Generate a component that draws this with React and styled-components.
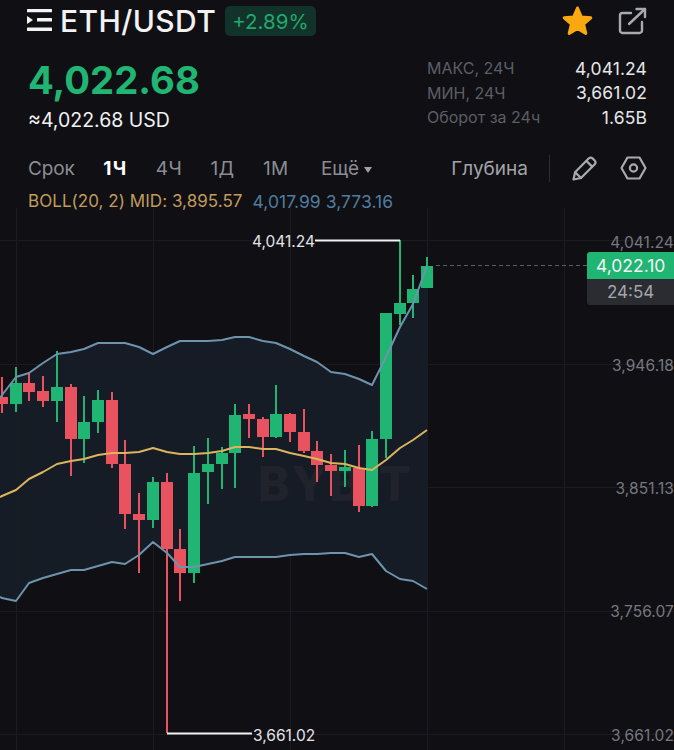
import React from "react";
import styled, { createGlobalStyle } from "styled-components";

const Global = createGlobalStyle`
  html, body { margin: 0; padding: 0; background: #0f0f14; }
  * { box-sizing: border-box; }
`;

const GREEN = "#21b573";
const RED = "#e8535f";
const CHART_TOP = 208;

const Page = styled.div`
  width: 674px;
  height: 750px;
  overflow: hidden;
  display: flex;
  flex-direction: column;
  background: #0f0f14;
  font-family: Inter, "Noto Sans", sans-serif;
  color: #f2f2f3;
`;

const TopBar = styled.header`
  height: 42px;
  padding: 0 27px;
  display: flex;
  align-items: center;
`;

const Pair = styled.h1`
  margin: 0 0 0 7px;
  font-size: 30px;
  font-weight: 500;
  line-height: 42px;
  letter-spacing: 0.4px;
`;

const Badge = styled.span`
  margin-left: 9px;
  height: 30px;
  padding: 0 7px;
  display: flex;
  align-items: center;
  border-radius: 5px;
  background: #12332a;
  color: #22a76c;
  font-size: 20.5px;
`;

const TopActions = styled.div`
  margin-left: auto;
  display: flex;
  align-items: center;
  gap: 24px;
`;

const Summary = styled.section`
  height: 100px;
  padding: 0 27px 0 28px;
  display: flex;
  justify-content: space-between;
`;

const PriceBlock = styled.div`
  display: flex;
  flex-direction: column;
`;

const LastPrice = styled.div`
  margin-top: 14px;
  font-size: 38.3px;
  line-height: 48px;
  font-weight: 700;
  color: ${GREEN};
`;

const UsdPrice = styled.div`
  margin-top: 3px;
  font-size: 19.5px;
  line-height: 26px;
  font-weight: 400;
`;

const Stats = styled.dl`
  margin: 14px 0 0;
  width: 220px;
  display: grid;
  grid-template-columns: auto 1fr;
  grid-auto-rows: 24.5px;
  align-items: center;
  font-size: 16px;
`;

const StatLabel = styled.dt`
  color: #5d5e64;
`;

const StatValue = styled.dd`
  margin: 0;
  text-align: right;
  color: #e6e6e8;
  font-size: 17.5px;
  letter-spacing: 0.1px;
`;

const Toolbar = styled.nav`
  height: 52px;
  padding: 0 27px 0 28px;
  display: flex;
  align-items: center;
  font-size: 19px;
`;

const Tabs = styled.div`
  display: flex;
  align-items: center;
  gap: 28.5px;
`;

const Tab = styled.span`
  color: ${(p) => (p.$active ? "#ffffff" : "#8c8d93")};
  font-weight: ${(p) => (p.$active ? 700 : 400)};
  letter-spacing: ${(p) => (p.$active ? "1.2px" : "0.3px")};

  &:first-child {
    letter-spacing: -0.1px;
  }
`;

const More = styled.span`
  display: flex;
  align-items: center;
  gap: 5px;
  color: #8c8d93;
  margin-left: 4px;
`;

const Caret = styled.i`
  width: 0;
  height: 0;
  margin-top: 3px;
  border-left: 4px solid transparent;
  border-right: 4px solid transparent;
  border-top: 6px solid #a0a1a6;
`;

const ToolbarRight = styled.div`
  margin-left: auto;
  display: flex;
  align-items: center;
`;

const Depth = styled.span`
  color: #a3a4a9;
`;

const Divider = styled.span`
  width: 1px;
  height: 27px;
  margin: 0 22px 0 21px;
  background: #2c2d33;
`;

const IconGap = styled.span`
  display: flex;
  align-items: center;
  gap: 23px;
`;

const Legend = styled.div`
  height: 14px;
  padding: 0 28px;
  display: flex;
  align-items: center;
  gap: 10px;
  font-size: 17px;
  letter-spacing: 0.05px;
  white-space: nowrap;
`;

const LegendGold = styled.span`
  color: #c19c5c;
`;

const LegendBlue = styled.span`
  color: #4f7d9e;
  font-size: 17.5px;
`;

const Chart = styled.section`
  position: relative;
  flex: 1;
`;

const ChartSvg = styled.svg`
  display: block;
  width: 674px;
  height: 542px;
`;

const AxisLabel = styled.span`
  position: absolute;
  right: 0;
  top: ${(p) => p.$y - CHART_TOP}px;
  transform: translateY(-50%);
  font-size: 15.5px;
  letter-spacing: 0.1px;
  color: #77787e;
`;

const ExtremeLabel = styled.span`
  position: absolute;
  left: ${(p) => p.$x}px;
  top: ${(p) => p.$y - CHART_TOP}px;
  transform: translateY(-50%);
  font-size: 15.5px;
  color: #e4e4e6;
`;

const PriceTag = styled.div`
  position: absolute;
  left: 587px;
  right: 0;
  top: ${252 - CHART_TOP}px;
  display: flex;
  flex-direction: column;
`;

const TagPrice = styled.div`
  height: 27px;
  display: flex;
  align-items: center;
  padding-left: 9px;
  background: ${GREEN};
  color: #f4f4f4;
  font-size: 17.5px;
  border-radius: 3px 0 0 0;
`;

const TagTimer = styled.div`
  height: 26px;
  display: flex;
  align-items: center;
  padding-left: 20px;
  background: #2a2c32;
  color: #a5a6ab;
  font-size: 17px;
  border-radius: 0 0 0 3px;
`;

/* x, bodyTop, bodyBottom, wickTop, wickBottom, up */
const candles = [
  [2, 397, 404, 377, 413, 0], [16, 383, 404, 367, 412, 1], [29, 383, 392, 372, 401, 0],
  [43, 391, 401, 376, 407, 0], [57, 387, 401, 351, 422, 1], [71, 387, 439, 384, 476, 0],
  [84, 422, 439, 396, 463, 1], [98, 400, 422, 390, 433, 1], [112, 400, 464, 392, 468, 0],
  [125, 464, 514, 440, 529, 0], [139, 514, 520, 493, 573, 0], [153, 482, 520, 477, 528, 1],
  [167, 482, 549, 473, 733, 0], [180, 549, 573, 529, 601, 0], [194, 473, 573, 446, 583, 1],
  [208, 464, 472, 438, 504, 1], [222, 453, 464, 447, 489, 1], [235, 415, 453, 404, 488, 1],
  [249, 414, 419, 404, 438, 0], [263, 419, 437, 417, 457, 0], [276, 414, 437, 385, 438, 1],
  [290, 414, 432, 413, 442, 0], [304, 432, 451, 409, 453, 0], [317, 451, 465, 441, 482, 0],
  [331, 465, 471, 454, 496, 0], [345, 467, 471, 450, 487, 1], [359, 468, 506, 445, 512, 0],
  [372, 439, 506, 431, 507, 1], [386, 313, 439, 313, 458, 1], [400, 303, 314, 240, 325, 1],
  [413, 289, 303, 275, 318, 1], [427, 266, 288, 257, 288, 1],
];

const upper = [[0,398],[2,395],[16,377],[29,373],[43,363],[57,354],[71,352],[84,349],[98,343],[112,343],[125,343],[139,347],[153,354],[167,347],[180,341],[194,341],[208,341],[222,340],[235,337],[249,337],[263,341],[276,343],[290,349],[304,356],[317,362],[331,372],[345,374],[359,379],[372,385],[386,357],[400,327],[413,304],[427,266]];
const lower = [[0,597],[2,598],[16,601],[29,583],[43,578],[57,574],[71,570],[84,570],[98,566],[112,562],[125,564],[139,555],[153,542],[167,553],[180,567],[194,567],[208,564],[222,561],[235,557],[249,557],[263,557],[276,557],[290,555],[304,554],[317,554],[331,553],[345,553],[359,557],[372,554],[386,571],[400,579],[413,581],[427,589]];
const mid = [[0,497],[2,496],[16,490],[29,479],[43,472],[57,464],[71,461],[84,459],[98,455],[112,453],[125,453],[139,452],[153,448],[167,452],[180,454],[194,454],[208,453],[222,451],[235,447],[249,447],[263,449],[276,449],[290,453],[304,456],[317,459],[331,463],[345,464],[359,468],[372,470],[386,460],[400,448],[413,440],[427,430]];

const pts = (a) => a.map((p) => p.join(",")).join(" ");
const bandFill = pts([...upper, ...[...lower].reverse()]);

const gridY = [240, 364, 487, 611, 734];
const gridX = [16, 153, 290, 427, 564];

function CandleChart() {
  return (
    <ChartSvg viewBox={`0 ${CHART_TOP} 674 542`}>
      <polygon points={bandFill} fill="#161c25" />
      {gridY.map((y) => (
        <line key={y} x1="0" x2="674" y1={y + 0.5} y2={y + 0.5} stroke="#1b1c22" />
      ))}
      {gridX.map((x) => (
        <line key={x} x1={x + 0.5} x2={x + 0.5} y1={CHART_TOP} y2="750" stroke="#1b1c22" />
      ))}
      <text x="258" y="501" fontFamily="Inter, sans-serif" fontWeight="800" fontSize="47.5" letterSpacing="2" fill="#20232b">BYBIT</text>
      <line x1="436" x2="587" y1="265.5" y2="265.5" stroke="#5c5d63" strokeDasharray="4 3" />
      {candles.map(([x, bt, bb, wt, wb, up]) => {
        const c = up ? GREEN : RED;
        return (
          <g key={x} fill={c}>
            <rect x={x - 1} y={wt} width="2" height={wb - wt} />
            <rect x={x - 6} y={bt} width="12" height={bb - bt} />
          </g>
        );
      })}
      <polyline points={pts(upper)} fill="none" stroke="#6d93ad" strokeWidth="2" strokeLinejoin="round" />
      <polyline points={pts(lower)} fill="none" stroke="#6d93ad" strokeWidth="2" strokeLinejoin="round" />
      <polyline points={pts(mid)} fill="none" stroke="#dcb45e" strokeWidth="2" strokeLinejoin="round" />
      <line x1="315" x2="400" y1="240.5" y2="240.5" stroke="#f2f2f2" strokeWidth="1.8" />
      <line x1="167" x2="252" y1="733.5" y2="733.5" stroke="#f2f2f2" strokeWidth="1.8" />
    </ChartSvg>
  );
}

const MenuIcon = () => (
  <svg width="26" height="24" viewBox="0 0 26 24">
    <g fill="#f4f4f4">
      <rect x="0" y="0" width="25" height="3.2" rx="0.5" />
      <polygon points="0,7 6,11 0,15" />
      <rect x="10" y="9" width="15" height="3.4" rx="0.5" />
      <rect x="0" y="18.5" width="25" height="3.4" rx="0.5" />
    </g>
  </svg>
);

const StarIcon = () => (
  <svg width="33" height="32" viewBox="0 0 33 32">
    <polygon
      points="16.5,3 20.4,12 29.8,12.8 22.6,19 24.8,28.4 16.5,23.4 8.2,28.4 10.4,19 3.2,12.8 12.6,12"
      fill="#f9a80f"
      stroke="#f9a80f"
      strokeWidth="3"
      strokeLinejoin="round"
    />
  </svg>
);

const ShareIcon = () => (
  <svg width="29" height="29" viewBox="0 0 29 29" fill="none" stroke="#a9aaae" strokeWidth="2.4" strokeLinecap="round" strokeLinejoin="round">
    <path d="M13 6H4.5A2.5 2.5 0 0 0 2 8.5v15A2.5 2.5 0 0 0 4.5 26h17a2.5 2.5 0 0 0 2.5-2.5V15" />
    <path d="M11 17L27 2" />
    <path d="M18.5 2H27v8" />
  </svg>
);

const PencilIcon = () => (
  <svg width="25" height="25" viewBox="0 0 25 25" fill="none" stroke="#a9aaae" strokeWidth="2.2" strokeLinejoin="round" strokeLinecap="round">
    <path d="M1.5 23.5l1.6-7.2L16.6 2.6a3 3 0 0 1 4.2 0l1.7 1.7a3 3 0 0 1 0 4.2L9 22z" />
    <path d="M3.2 16.4L9 22" />
    <path d="M14.5 5l5.6 5.6" />
  </svg>
);

const HexIcon = () => (
  <svg width="27" height="24" viewBox="0 0 27 24" fill="none" stroke="#a9aaae" strokeWidth="2.2" strokeLinejoin="round">
    <path d="M7.5 1.5h12L25.5 12l-6 10.5h-12L1.5 12z" />
    <circle cx="13.5" cy="12" r="3.6" />
  </svg>
);

export default function App() {
  return (
    <Page>
      <Global />
      <TopBar>
        <MenuIcon />
        <Pair>ETH/USDT</Pair>
        <Badge>+2.89%</Badge>
        <TopActions>
          <StarIcon />
          <ShareIcon />
        </TopActions>
      </TopBar>
      <Summary>
        <PriceBlock>
          <LastPrice>4,022.68</LastPrice>
          <UsdPrice>≈4,022.68 USD</UsdPrice>
        </PriceBlock>
        <Stats>
          <StatLabel>МАКС, 24Ч</StatLabel>
          <StatValue>4,041.24</StatValue>
          <StatLabel>МИН, 24Ч</StatLabel>
          <StatValue>3,661.02</StatValue>
          <StatLabel>Оборот за 24ч</StatLabel>
          <StatValue>1.65B</StatValue>
        </Stats>
      </Summary>
      <Toolbar>
        <Tabs>
          <Tab>Срок</Tab>
          <Tab $active>1Ч</Tab>
          <Tab>4Ч</Tab>
          <Tab>1Д</Tab>
          <Tab>1М</Tab>
          <More>
            Ещё
            <Caret />
          </More>
        </Tabs>
        <ToolbarRight>
          <Depth>Глубина</Depth>
          <Divider />
          <IconGap>
            <PencilIcon />
            <HexIcon />
          </IconGap>
        </ToolbarRight>
      </Toolbar>
      <Legend>
        <LegendGold>BOLL(20, 2) MID: 3,895.57</LegendGold>
        <LegendBlue>4,017.99 3,773.16</LegendBlue>
      </Legend>
      <Chart>
        <CandleChart />
        <ExtremeLabel $x={252} $y={241}>4,041.24</ExtremeLabel>
        <ExtremeLabel $x={253} $y={735}>3,661.02</ExtremeLabel>
        <AxisLabel $y={242}>4,041.24</AxisLabel>
        <AxisLabel $y={365}>3,946.18</AxisLabel>
        <AxisLabel $y={488}>3,851.13</AxisLabel>
        <AxisLabel $y={611}>3,756.07</AxisLabel>
        <AxisLabel $y={735}>3,661.02</AxisLabel>
        <PriceTag>
          <TagPrice>4,022.10</TagPrice>
          <TagTimer>24:54</TagTimer>
        </PriceTag>
      </Chart>
    </Page>
  );
}
